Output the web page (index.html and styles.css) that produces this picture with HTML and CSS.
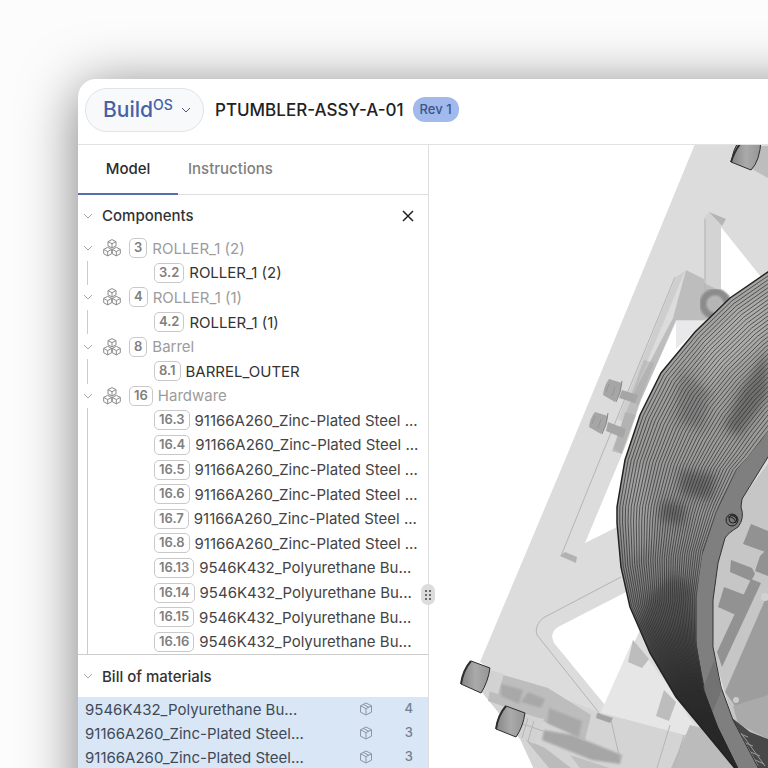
FILE: index.html
```html
<!DOCTYPE html>
<html lang="en">
<head>
  <meta charset="UTF-8">
  <title>PTUMBLER-ASSY-A-01 - BuildOS</title>
  <link rel="stylesheet" href="styles.css">
</head>
<body>

  <!-- shared icons -->
  <svg class="sprite" aria-hidden="true">
    <symbol id="chevron" viewBox="0 0 10 10"><path d="M1 3l4 4 4-4"/></symbol>
    <symbol id="cube" viewBox="0 0 14 14">
      <path d="M7 1l5.500 2.800v6.400L7 13l-5.500-2.800V3.800zM1.500 3.800L7 6.600l5.500-2.800M7 6.600V13M4.200 2.400l5.500 2.800"/>
    </symbol>
    <symbol id="cubes" viewBox="0 0 18 18">
      <path d="M9 .6l4 2v4.200L9 9 5 6.800V2.600zM5 2.600l4 2.100 4-2.100M9 4.700V9"/>
      <path d="M4.700 8.300l4 2.100v4.300l-4 2.200-4-2.200v-4.300zM.7 10.400l4 2.200 4-2.200M4.700 12.600v4.300"/>
      <path d="M13.300 8.300l4 2.100v4.300l-4 2.200-4-2.200v-4.300zM9.300 10.400l4 2.200 4-2.200M13.300 12.600v4.300"/>
    </symbol>
  </svg>

  <div class="window">
    <header class="topbar">
      <button class="brand" type="button">
        <span class="brand-name">Build</span><span class="brand-os">OS</span>
        <svg class="brand-arrow"><use href="#chevron"/></svg>
      </button>
      <h1 class="title">PTUMBLER-ASSY-A-01</h1>
      <span class="rev">Rev 1</span>
    </header>

    <div class="workspace">
      <aside class="sidebar">
        <nav class="tabs">
          <button class="tab active" type="button">Model</button>
          <button class="tab" type="button">Instructions</button>
        </nav>

        <section>
          <div class="section-head">
            <button class="toggle" type="button" aria-label="Toggle components"><svg><use href="#chevron"/></svg></button>
            <h2>Components</h2>
            <button class="close" type="button" aria-label="Close"><svg viewBox="0 0 12 12"><path d="M1 1l10 10M11 1L1 11"/></svg></button>
          </div>
          <ul class="tree">
            <li class="group"><button class="toggle" type="button" aria-label="Toggle 3"><svg><use href="#chevron"/></svg></button><svg class="cubes"><use href="#cubes"/></svg><span class="num">3</span><span class="name">ROLLER_1 (2)</span></li>
            <li class="part"><span class="num">3.2</span><span class="name">ROLLER_1 (2)</span></li>
            <li class="group"><button class="toggle" type="button" aria-label="Toggle 4"><svg><use href="#chevron"/></svg></button><svg class="cubes"><use href="#cubes"/></svg><span class="num">4</span><span class="name">ROLLER_1 (1)</span></li>
            <li class="part"><span class="num">4.2</span><span class="name">ROLLER_1 (1)</span></li>
            <li class="group"><button class="toggle" type="button" aria-label="Toggle 8"><svg><use href="#chevron"/></svg></button><svg class="cubes"><use href="#cubes"/></svg><span class="num">8</span><span class="name">Barrel</span></li>
            <li class="part"><span class="num">8.1</span><span class="name">BARREL_OUTER</span></li>
            <li class="group"><button class="toggle" type="button" aria-label="Toggle 16"><svg><use href="#chevron"/></svg></button><svg class="cubes"><use href="#cubes"/></svg><span class="num">16</span><span class="name">Hardware</span></li>
            <li class="part long"><span class="num">16.3</span><span class="name">91166A260_Zinc-Plated Steel ...</span></li>
            <li class="part long"><span class="num">16.4</span><span class="name">91166A260_Zinc-Plated Steel ...</span></li>
            <li class="part long"><span class="num">16.5</span><span class="name">91166A260_Zinc-Plated Steel ...</span></li>
            <li class="part long"><span class="num">16.6</span><span class="name">91166A260_Zinc-Plated Steel ...</span></li>
            <li class="part long"><span class="num">16.7</span><span class="name">91166A260_Zinc-Plated Steel ...</span></li>
            <li class="part long"><span class="num">16.8</span><span class="name">91166A260_Zinc-Plated Steel ...</span></li>
            <li class="part long"><span class="num">16.13</span><span class="name">9546K432_Polyurethane Bu...</span></li>
            <li class="part long"><span class="num">16.14</span><span class="name">9546K432_Polyurethane Bu...</span></li>
            <li class="part long"><span class="num">16.15</span><span class="name">9546K432_Polyurethane Bu...</span></li>
            <li class="part long"><span class="num">16.16</span><span class="name">9546K432_Polyurethane Bu...</span></li>
          </ul>
        </section>

        <section class="bom">
          <div class="section-head">
            <button class="toggle" type="button" aria-label="Toggle bill of materials"><svg><use href="#chevron"/></svg></button>
            <h2>Bill of materials</h2>
          </div>
          <table class="bom-table">
            <tr><td>9546K432_Polyurethane Bu...</td><td class="bom-icon"><svg><use href="#cube"/></svg></td><td class="qty">4</td></tr>
            <tr><td>91166A260_Zinc-Plated Steel...</td><td class="bom-icon"><svg><use href="#cube"/></svg></td><td class="qty">3</td></tr>
            <tr><td>91166A260_Zinc-Plated Steel...</td><td class="bom-icon"><svg><use href="#cube"/></svg></td><td class="qty">3</td></tr>
          </table>
        </section>
      </aside>

      <main class="viewer">
        <button class="handle" type="button" aria-label="Resize panel">
          <svg viewBox="0 0 8 12"><circle cx="2" cy="2" r="1"/><circle cx="6" cy="2" r="1"/><circle cx="2" cy="6" r="1"/><circle cx="6" cy="6" r="1"/><circle cx="2" cy="10" r="1"/><circle cx="6" cy="10" r="1"/></svg>
        </button>
        <svg class="model" viewBox="429 145 339 623" preserveAspectRatio="xMinYMin slice">
          <defs>
            <linearGradient id="shell" x1="0" y1="0" x2="0" y2="1">
              <stop offset="0" stop-color="#a6a6a3"/>
              <stop offset=".5" stop-color="#979797"/>
              <stop offset=".7" stop-color="#777"/>
              <stop offset=".85" stop-color="#333"/>
              <stop offset="1" stop-color="#111"/>
            </linearGradient>
            <linearGradient id="bolt" x1="0" y1="0" x2="1" y2="0">
              <stop offset="0" stop-color="#858585"/>
              <stop offset=".5" stop-color="#aaa"/>
              <stop offset="1" stop-color="#959595"/>
            </linearGradient>
            <filter id="soft"><feGaussianBlur stdDeviation="5"/></filter>
            <filter id="haze"><feGaussianBlur stdDeviation="1"/></filter>
            <clipPath id="shellClip"><path id="shellClipPath"/></clipPath>
          </defs>

          <!-- side plate with cutouts -->
          <path fill="#dcdcdc" fill-rule="evenodd" d="M695 144H800V800H760L740 768 685 737 598 713 491 670 480 662 565 460zM721 227L765 282 730 298 721 290zM676 322L641 400 628 440 585 543 615 528 640 510 700 322zM630 590L558 627Q549 633 554 643L605 705 640 630z"/>
          <path fill="#e9e9ec" d="M676 321h30l-30 28z"/>
          <path fill="#bdbdbd" d="M686 270L712 283 730 296 705 320H676L640 402 622 454 612 451 630 400 673 318z"/>
          <path fill="#cecece" d="M676 277l9-6-46 110-17 41-4-3z"/>
          <path fill="#d3d3d3" d="M704 218l5-6 12 14v65l-17-8z"/>
          <path fill="#b5b5b5" d="M709 212l17 7-4 7z"/>
          <path class="edge" d="M705 219v72M675 277L601 457 561 556M621 577L543 618Q534 626 537 635L600 714M633 664l-18 48M647 676l-8 38"/>
          <path fill="#b2b2b2" d="M560 556l5-4 12 5-1 6z"/>
          <g filter="url(#haze)">
            <circle cx="715" cy="304" r="12" fill="none" stroke="#8b8b8b" stroke-width="7"/>
            <circle cx="715" cy="304" r="7" fill="#b5b5b5"/>
          </g>

          <!-- ghosted screws -->
          <g fill="#a6a6a6">
            <path d="M609 379Q604 386 603 395L615 402Q621 393 622 383z"/>
            <path d="M622 390l16 5-3 8-16-5z"/>
            <path d="M595 412Q590 418 589 427L601 434Q607 425 608 416z"/>
            <path d="M608 422l18 7-3 9-17-7z"/>
            <path d="M644 360l10 3-16 42-9-4zM625 412l11 3-15 38-7-4z" opacity=".45"/>
          </g>
          <g stroke="#868686" stroke-width="1"><path d="M622 381q-1 12-6 21M608 413q-1 12-6 21"/><path d="M606 392l3-8M612 396l3-9M592 424l3-8M598 428l3-9" opacity=".5"/></g>

          <!-- lower rail -->
          <path fill="#e6e6e6" d="M633 640l35 45 32 50-22 3-78-24z"/>
          <path fill="#d4d4d4" d="M480 690L491 670 598 712 768 757V800H548L520 739z"/>
          <path fill="#bdbdbd" d="M493 672l55 16 43 27-6 25-53-24-44-15z"/>
          <g filter="url(#haze)">
            <path fill="#a8a8a8" d="M501 684l22 6-4 14-18-8zM528 692l17 7-4 9-20-6zM549 708l33 13-3 16-32-14z"/>
            <path fill="#a6a6a6" d="M544 730l28 5 50 20-2 9-28-4-50-20z"/>
          </g>
          <path fill="#bbb" d="M525 739l20 9 26 20h-22zM690 725l78 20v23h-97z"/>
          <path fill="#c0c0c0" d="M570 755l40 13h-30z"/>
          <path fill="#bdbdbd" d="M633 640l16 19-7 9-14-6zM664 690l12 12-7 19-13-5z"/>
          <path class="edge" d="M598 713l13 7 9 40M670 725l-13 43M684 735l-10 33"/>
          <path fill="#a3a3a3" d="M597 713l16 5-3 5-14-5z"/>

          <!-- solid screw heads -->
          <g id="heads" stroke="#2e2e2e" stroke-width="1">
            <path fill="#d2d2d2" stroke="none" d="M487 669l17 5-6 20-17-5z"/>
            <path fill="url(#bolt)" d="M471 661Q463 670 461 684L481 693Q488 682 490 668z"/>
            <path fill="none" stroke-width="2" d="M471 661Q463 670 461 684"/>
            <path fill="#d2d2d2" stroke="none" d="M523 714l21 5-10 25-16-8z"/>
            <path fill="url(#bolt)" d="M506 706Q498 715 496 729L516 737Q523 727 525 713z"/>
            <path fill="none" stroke-width="2" d="M506 706Q498 715 496 729"/>
            <path fill="#bdbdbd" stroke="none" d="M756 146h12v32l-16-9z"/>
            <path fill="url(#bolt)" d="M739 140Q733 150 731 162L751 170Q760 161 761 140z"/>
            <path fill="none" stroke-width="2" d="M740 144Q734 152 731 162"/>
          </g>
          <path class="edge" d="M528 718l-6 20M534 721l-6 20M523 724l20 7"/>

          <!-- inside of the drum -->
          <path fill="#c6c6c6" d="M800 420L741 500 720 545 712 600 714 655 733 720 770 790H800z"/>
          <g fill="#9d9d9d">
            <path d="M768 593L725 692 735 706 768 698z"/>
            <path fill="#929292" d="M751 524l17 7v22l-25-9zM731 560l21 8 3 6-4 7-21-9zM760 556l8-8v28l-13-5zM724 587l21 8-7 21-20-9zM751 579l10 4-39 84-5-15z"/>
            <path fill="#aaa" d="M733 706l35-11v44l-30-15z"/>
          </g>
          <circle cx="765" cy="597" r="4" fill="#d2d2d2"/><circle cx="736" cy="700" r="3" fill="#ccc"/>
          <path fill="#484848" d="M732 718l18 14 18 7v36h-13z"/>
          <path fill="none" stroke="#999" stroke-width="1" d="M736 726l22 40M741 733l24 33M738 733l10 4M743 742l10 4M748 751l12 5M753 759l11 5"/>

          <!-- drum rim -->
          <path fill="#7f7f7f" stroke="#333" stroke-width="1" d="M800 380L761 440 736 470 716 512 701 557 696 597V647L708 707 723 740 740 775H762L733 720 721 687 713 647V600L718 563 725 538Q728 533 738 527 745 518 741 507L742 499 768 457 800 410z"/>
          <path fill="#6c6c6c" d="M702 690l12-29 8 28-10 24z" opacity=".7"/>
          <circle cx="732" cy="520" r="6" fill="#777" stroke="#222"/><circle cx="733" cy="519" r="4" fill="none" stroke="#222"/><path d="M728 517q6-1 8 6M731 515q5 1 6 5" stroke="#222" fill="none"/>

          <!-- drum shell, contour lines are added by model.js -->
          <path id="shellBody" fill="url(#shell)"/>
          <g clip-path="url(#shellClip)">
            <g filter="url(#soft)" fill="#333">
              <path d="M768 350l-28 40-16 38 16 8 28-40z" opacity=".45"/>
              <path d="M680 370l30 20-6 40-28-8z" opacity=".25"/>
              <path d="M680 470l36 4-4 26-32-6zM662 500l24 4-2 22-26-6z" opacity=".45"/>
              <path d="M650 595l22-20 20 10 4 60 20 80-30-20-50-80z" opacity=".4"/>
              <path fill="#bbb" d="M700 345l40-40 28-10v40l-60 50z" opacity=".4"/>
              <path fill="#bbb" d="M622 480l22-20 10 80-24 20z" opacity=".3"/>
            </g>
            <g id="contours"></g>
          </g>
          <path id="shellEdge" fill="none" stroke="#222" stroke-width="1.500"/>
        </svg>
      </main>
    </div>
  </div>

  <script src="model.js"></script>
</body>
</html>
```

FILE: styles.css
```css
* { box-sizing: border-box; }
body { margin: 0; padding: 79px 0 0 78px; height: 100vh; overflow: hidden; background: #fcfcfc; font-family: Inter, "Liberation Sans", sans-serif; font-size: 15px; color: #333; }
button { padding: 0; border: none; background: none; font: inherit; color: inherit; cursor: pointer; }
svg { display: block; fill: none; }
h1, h2, ul { margin: 0; padding: 0; }
h2 { font-size: 15px; font-weight: 500; }
.sprite { position: absolute; width: 0; height: 0; }

.window { display: flex; flex-direction: column; height: 120vh; margin-right: -120px; background: #fff; border-radius: 18px; box-shadow: 0 8px 56px rgba(0,0,0,0.5); }

/* top bar */
.topbar { display: flex; align-items: center; height: 66px; padding: 0 7px 4px; border-bottom: 1px solid #e2e2e2; }
.brand { display: flex; align-items: center; width: 119px; height: 44px; padding: 0 12px 0 17px; border: 1px solid #e0e4e6; border-radius: 22px; background: #f7f9fa; color: #4462a8; }
.brand-name { font-size: 21px; font-weight: 500; }
.brand-os { padding-bottom: 10px; font-size: 14px; font-weight: 500; line-height: 16px; }
.brand-arrow { width: 10px; height: 10px; margin-left: auto; stroke: #4b5b75; }
.title { margin-left: 11px; font-size: 17px; font-weight: 500; color: #222; }
.rev { margin-left: 9px; padding: 0 7px; border-radius: 12px; background: #a1b9ec; color: #3b5688; font-size: 13px; font-weight: 500; line-height: 25px; }

.workspace { display: flex; flex: 1; min-height: 0; }
.sidebar { flex: 0 0 351px; border-right: 1px solid #dedede; }

.tabs { display: flex; height: 50px; border-bottom: 1px solid #dedede; }
.tab { height: 50px; padding: 0 10px 2px; border-bottom: 2px solid transparent; color: #808080; font-weight: 500; }
.tab.active { width: 100px; border-color: #5470a8; color: #2c2c2c; }

.section-head { display: flex; align-items: center; height: 41px; padding-right: 14px; }
.toggle { flex: none; display: flex; align-items: center; width: 10px; height: 16px; margin: 0 9px 0 5px; }
.toggle svg { width: 10px; height: 10px; stroke: #aaa; }
.close { margin-left: auto; }
.close svg { width: 12px; height: 12px; stroke: #222; stroke-width: 1.5; }

/* component tree */
.tree { display: grid; grid-auto-rows: 1fr; height: 418px; list-style: none; }
.tree li { display: flex; align-items: center; min-height: 0; white-space: nowrap; }
.group { color: #9c9c9c; }
.cubes { width: 20px; height: 18px; margin-right: 7px; stroke: #8a8a8a; stroke-width: 1; }
.num { padding: 0 4px 1px; border: 1px solid #c9c9c9; border-radius: 5px; color: #808080; font-size: 13px; font-weight: 600; line-height: 17px; }
.name { margin-left: 5px; }
.part { margin-left: 9px; padding-left: 66px; border-left: 1px solid #ccc; }
.part.long .name { color: #444; }

/* bill of materials */
.bom { border-top: 1px solid #ccc; }
.bom .section-head { height: 42px; }
.bom-table { width: 100%; border-collapse: collapse; background: #d9e6f5; color: #3f4a58; }
.bom-table td { height: 24px; padding: 0 0 0 7px; }
.bom-table .bom-icon { width: 28px; }
.bom-icon svg { width: 14px; height: 14px; stroke: #8a95a3; }
.bom-table .qty { width: 48px; padding: 0 15px 3px 0; text-align: right; color: #74808f; font-size: 13px; font-weight: 500; }

/* 3d view */
.viewer { position: relative; flex: 1; min-width: 0; }
.model { width: calc(100% - 120px); height: calc(100vh - 145px); overflow: hidden; }
.edge { fill: none; stroke: #b5b5b5; stroke-width: 1; }
.handle { position: absolute; left: -8px; top: 439px; display: flex; align-items: center; justify-content: center; width: 14px; height: 21px; border-radius: 7px; background: #dcdcdc; }
.handle svg { width: 8px; height: 12px; fill: #444; }
```

FILE: model.js
```js
// outer and inner edge of the drum shell, point by point
const outer = [[790,262],[768,272],[730,298],[695,332],[661,373],[640,415],[625,460],[617,507],[617,523],[621,567],[630,607],[650,653],[676,697],[705,732],[738,772]];
const inner = [[850,350],[830,370],[800,397],[775,422],[761,440],[748,457],[736,470],[720,503],[716,512],[703,550],[696,597],[696,640],[704,690],[718,727],[740,772]];

const toPath = (points) => 'M' + points.map((p) => p.join(' ')).join('L');
const body = toPath(outer.concat([...inner].reverse())) + 'z';

document.getElementById('shellBody').setAttribute('d', body);
document.getElementById('shellClipPath').setAttribute('d', body);
document.getElementById('shellEdge').setAttribute('d', toPath(outer));

const LINES = 36;
const contours = document.getElementById('contours');
for (let i = 1; i <= LINES; i++) {
  const t = i / LINES;
  const points = outer.map((p, k) => [p[0] + (inner[k][0] - p[0]) * t, p[1] + (inner[k][1] - p[1]) * t]);
  const line = document.createElementNS('http://www.w3.org/2000/svg', 'path');
  line.setAttribute('d', toPath(points));
  line.setAttribute('fill', 'none');
  line.setAttribute('stroke', '#2b2b2b');
  line.setAttribute('stroke-opacity', '.7');
  contours.appendChild(line);
}
```
